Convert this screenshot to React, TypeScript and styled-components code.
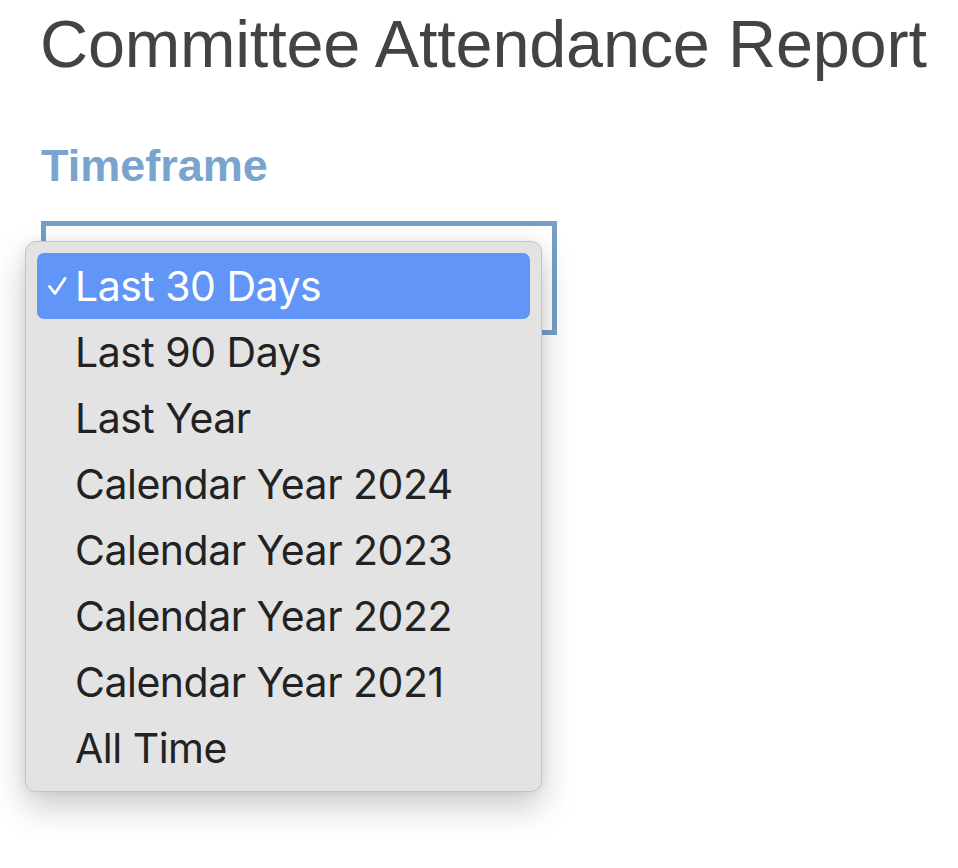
import styled, { createGlobalStyle } from "styled-components";

const GlobalStyle = createGlobalStyle`
  html, body {
    margin: 0;
    padding: 0;
    background: #ffffff;
  }
  body {
    font-family: "Liberation Sans", Arial, sans-serif;
  }
`;

const Page = styled.div`
  min-height: 100vh;
  box-sizing: border-box;
  padding: 6px 0 0 41px;
`;

const Title = styled.h1`
  margin: 0;
  font-family: "Liberation Sans", Arial, sans-serif;
  font-weight: 400;
  font-size: 66.6px;
  line-height: 76px;
  color: #434343;
  letter-spacing: -0.2px;
  margin-left: -1px;
`;

const Label = styled.label`
  display: block;
  margin-top: 58px;
  font-family: "Liberation Sans", Arial, sans-serif;
  font-weight: 700;
  font-size: 45px;
  line-height: 52px;
  color: #79a4cd;
`;

const SelectWrap = styled.div`
  position: relative;
  margin-top: 29px;
  width: 516px;
`;

const SelectBox = styled.div`
  box-sizing: border-box;
  width: 516px;
  height: 114px;
  border: 5px solid #76a0c8;
  background: #ffffff;
`;

const Menu = styled.ul`
  position: absolute;
  top: 20px;
  left: -16px;
  box-sizing: border-box;
  width: 517px;
  margin: 0;
  padding: 11px 11px 10px;
  list-style: none;
  background: #e3e3e3;
  border: 1px solid #c4c4c4;
  border-radius: 11px;
  box-shadow: 0 14px 34px rgba(0, 0, 0, 0.22), 0 0 8px rgba(0, 0, 0, 0.06);
`;

const Option = styled.li<{ $selected?: boolean }>`
  display: flex;
  align-items: center;
  height: 66px;
  padding-left: 10px;
  border-radius: 7px;
  font-family: Inter, "Noto Sans", sans-serif;
  font-size: 41px;
  letter-spacing: -0.5px;
  color: ${(p) => (p.$selected ? "#ffffff" : "#222222")};
  background: ${(p) => (p.$selected ? "#6295f8" : "transparent")};
`;

const Check = styled.span`
  display: inline-flex;
  flex: 0 0 28px;
  justify-content: flex-start;
  align-items: center;
`;

const options = [
  "Last 30 Days",
  "Last 90 Days",
  "Last Year",
  "Calendar Year 2024",
  "Calendar Year 2023",
  "Calendar Year 2022",
  "Calendar Year 2021",
  "All Time",
];

export default function App() {
  return (
    <>
      <GlobalStyle />
      <Page>
        <Title>Committee Attendance Report</Title>
        <Label>Timeframe</Label>
        <SelectWrap>
          <SelectBox />
          <Menu>
            {options.map((o, i) => (
              <Option key={o} $selected={i === 0}>
                <Check>
                  {i === 0 && (
                    <svg width="20" height="20" viewBox="0 0 20 20" fill="none">
                      <path
                        d="M2.5 10.5 L8 17.5 L18 2.5"
                        stroke="#ffffff"
                        strokeWidth="2.8"
                        strokeLinecap="round"
                        strokeLinejoin="round"
                      />
                    </svg>
                  )}
                </Check>
                {o}
              </Option>
            ))}
          </Menu>
        </SelectWrap>
      </Page>
    </>
  );
}
